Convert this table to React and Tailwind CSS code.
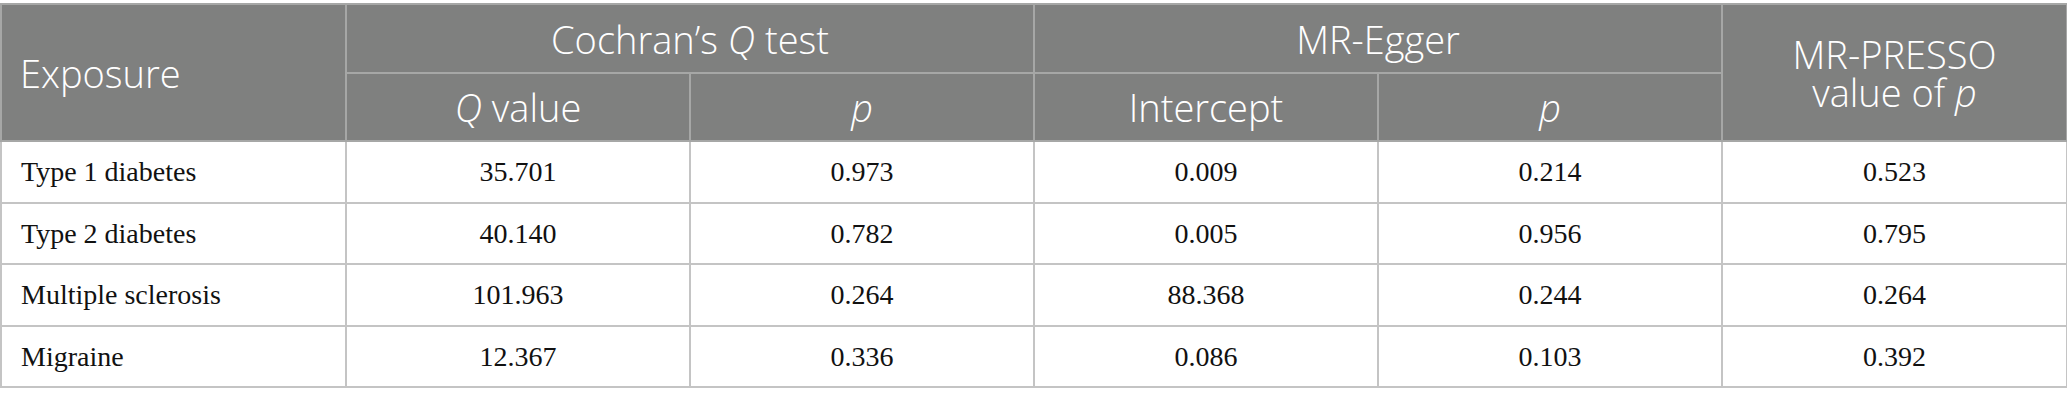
const ROWS = [
  ['Type 1 diabetes', '35.701', '0.973', '0.009', '0.214', '0.523'],
  ['Type 2 diabetes', '40.140', '0.782', '0.005', '0.956', '0.795'],
  ['Multiple sclerosis', '101.963', '0.264', '88.368', '0.244', '0.264'],
  ['Migraine', '12.367', '0.336', '0.086', '0.103', '0.392'],
]

export default function App() {
  const th = "border-2 border-[#a6a7a6] font-['Open_Sans',sans-serif] font-light text-white text-[38px] leading-none"
  const td = "border-2 border-[#c4c4c4] font-['Liberation_Serif',serif] text-[#111] text-[28px] leading-none"

  return (
    <div className="w-[2067px] h-[403px] bg-white pt-[3px]">
      <table className="w-[2066px] border-collapse table-fixed">
        <colgroup>
          <col className="w-[345px]" />
          <col className="w-[344px]" />
          <col className="w-[344px]" />
          <col className="w-[344px]" />
          <col className="w-[344px]" />
          <col className="w-[345px]" />
        </colgroup>
        <thead className="bg-[#7f807f]">
          <tr className="h-[69px]">
            <th rowSpan={2} className={`${th} text-left pl-[18px]`}>Exposure</th>
            <th colSpan={2} className={th}>Cochran’s <i>Q</i> test</th>
            <th colSpan={2} className={th}>MR-Egger</th>
            <th rowSpan={2} className={`${th} leading-[44px]`}>
              MR-PRESSO<br />value of <i>p</i>
            </th>
          </tr>
          <tr className="h-[68px]">
            <th className={th}><i>Q</i> value</th>
            <th className={th}><i>p</i></th>
            <th className={th}>Intercept</th>
            <th className={th}><i>p</i></th>
          </tr>
        </thead>
        <tbody>
          {ROWS.map((r, i) => (
            <tr key={r[0]} className={i % 2 ? 'h-[61px]' : 'h-[62px]'}>
              <td className={`${td} text-left pl-[19px]`}>{r[0]}</td>
              {r.slice(1).map((v, j) => (
                <td key={j} className={`${td} text-center`}>{v}</td>
              ))}
            </tr>
          ))}
        </tbody>
      </table>
    </div>
  )
}
